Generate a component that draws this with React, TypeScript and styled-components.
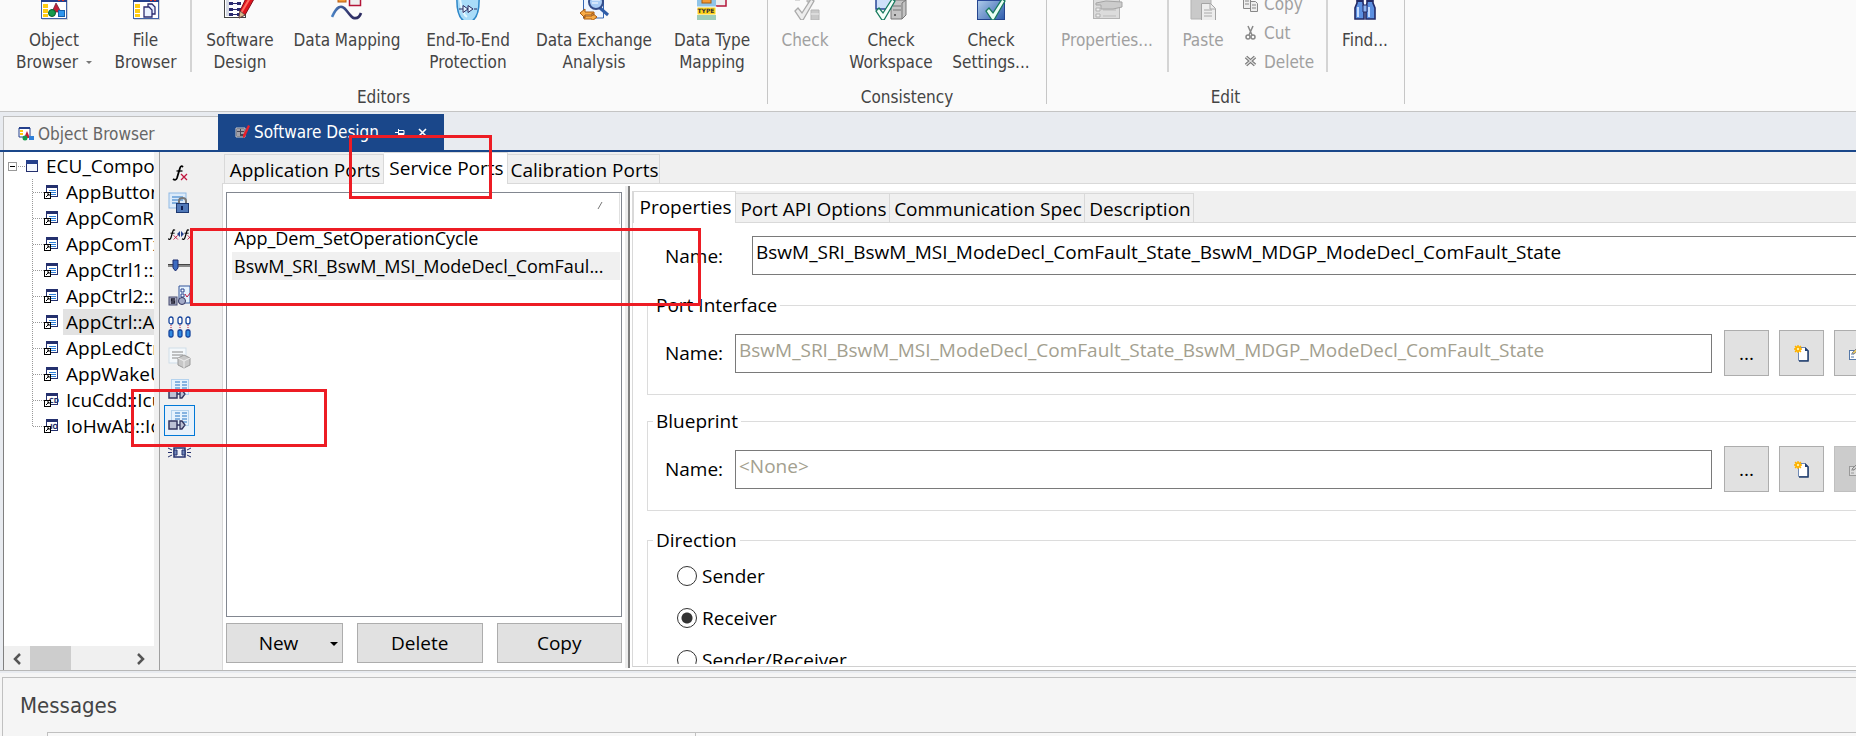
import React from 'react';
import styled, { createGlobalStyle, css } from 'styled-components';

const uiFont = '"Open Sans", "Noto Sans", sans-serif';
const chromeFont = '"DejaVu Sans Condensed", "DejaVu Sans", sans-serif';
const navy = '#1a478a';

const GlobalStyle = createGlobalStyle`
  *, *::before, *::after { box-sizing: border-box; }
  body { margin: 0; background: #e8ebf0; overflow: hidden; }
  button, input { font: inherit; color: inherit; }
`;

const Window = styled.div`
  position: relative;
  display: flex;
  flex-direction: column;
  height: 100vh;
  overflow: hidden;
  font: 19px/26px ${uiFont};
  color: #000;
`;

/* ---------- ribbon ---------- */
const Ribbon = styled.header`
  display: flex;
  flex: none;
  height: 112px;
  overflow: hidden;
  background: #fafafa;
  border-bottom: 1px solid #c4c4c4;
  font: 17px/22px ${chromeFont};
  color: #444;
`;
const Group = styled.section<{ $width: number }>`
  display: flex;
  flex-direction: column;
  flex: none;
  width: ${p => p.$width}px;
  height: 104px;
  border-right: 1px solid #c6c6c6;
`;
const GroupBody = styled.div`
  display: flex;
  flex: none;
  height: 98px;
  margin-top: -12px;
`;
const GroupLabel = styled.div`
  flex: none;
  text-align: center;
`;
const Tool = styled.button<{ $width: number }>`
  display: flex;
  flex-direction: column;
  align-items: center;
  flex: none;
  gap: 9px;
  width: ${p => p.$width}px;
  padding: 0;
  border: 0;
  background: none;
  white-space: nowrap;
  svg { flex: none; }
  &:disabled { color: #a0a0a0; }
`;
const Separator = styled.div<{ $space?: number }>`
  flex: none;
  width: 2px;
  height: 84px;
  margin: 0 ${p => p.$space ?? 0}px;
  background: #d4d4d4;
`;
const Caret = styled.span`
  display: inline-block;
  margin: 0 0 4px 8px;
  border: 3px solid transparent;
  border-top-color: #777;
  border-bottom: 0;
`;
const SmallTools = styled.div`
  display: flex;
  flex-direction: column;
  width: 89px;
  padding: 1px 0 0 5px;
`;
const SmallTool = styled.button`
  display: flex;
  align-items: center;
  gap: 5px;
  height: 29px;
  padding: 0;
  border: 0;
  background: none;
  &:disabled { color: #a0a0a0; }
`;

/* ---------- document tabs ---------- */
const DocTabs = styled.nav`
  display: flex;
  flex: none;
  align-items: flex-end;
  height: 40px;
  padding: 0 0 0 3px;
  border-bottom: 2px solid ${navy};
  background: #e8ebf0;
  font: 17px/22px ${chromeFont};
`;
const DocTab = styled.button<{ $active?: boolean }>`
  display: flex;
  align-items: center;
  flex: none;
  gap: 4px;
  width: 215px;
  height: 34px;
  padding: 0 14px;
  border: 1px solid #c0c0c0;
  border-width: 1px 0 0 1px;
  background: #f5f5f5;
  color: #666;
  white-space: nowrap;
  ${p => p.$active && css`
    width: 226px;
    height: 36px;
    padding: 0 0 0 17px;
    border: 0;
    background: ${navy};
    color: #fff;
  `}
`;
const TabTools = styled.span`
  display: flex;
  gap: 13px;
  margin-left: 12px;
`;

/* ---------- workspace ---------- */
const Workspace = styled.main`
  display: flex;
  flex: 1;
  min-height: 0;
  padding-left: 3px;
  border-bottom: 1px solid #b8b8b8;
`;
const TreePane = styled.aside`
  display: flex;
  flex-direction: column;
  flex: none;
  width: 157px;
  border: 1px solid #808080;
  border-width: 0 1px 0 1px;
  border-right-color: #a0a0a0;
  background: linear-gradient(to right, #fff 150px, #f0f0f0 150px);
`;
const Tree = styled.ul`
  flex: 1;
  width: 150px;
  margin: 0;
  padding: 1px 0 0;
  overflow: hidden;
  list-style: none;
`;
const TreeRow = styled.li`
  display: flex;
  align-items: center;
  height: 26px;
  white-space: nowrap;
  svg { flex: none; }
`;
const TreeText = styled.span<{ $selected?: boolean }>`
  flex: 1;
  height: 26px;
  margin-left: 4px;
  padding-left: 3px;
  background: ${p => (p.$selected ? '#e2e2e2' : 'transparent')};
`;
const ScrollBar = styled.div`
  display: flex;
  flex: none;
  width: 150px;
  height: 24px;
  background: #f0f0f0;
`;
const ScrollButton = styled.button`
  width: 26px;
  padding: 0;
  border: 0;
  background: none;
  line-height: 1;
`;
const ScrollTrack = styled.div`
  flex: 1;
`;
const ScrollThumb = styled.div`
  width: 41px;
  height: 100%;
  background: #cdcdcd;
`;

const SideBar = styled.div`
  display: flex;
  flex-direction: column;
  align-items: center;
  flex: none;
  width: 62px;
  padding: 5px 27px 0 4px;
  background: #f0f0f0;
`;
const SideButton = styled.button<{ $active?: boolean }>`
  display: flex;
  align-items: center;
  justify-content: center;
  flex: none;
  width: 31px;
  height: 31px;
  padding: 0;
  border: 1px solid ${p => (p.$active ? '#0078d7' : 'transparent')};
  background: ${p => (p.$active ? '#e8f1fa' : 'none')};
`;

const Editor = styled.div`
  display: flex;
  flex-direction: column;
  flex: 1;
  min-width: 0;
  background: #f0f0f0;
`;
const TabRow = styled.div<{ $inset?: boolean }>`
  display: flex;
  align-items: flex-end;
  flex: none;
  height: 32px;
  padding-left: ${p => (p.$inset ? 2 : 0)}px;
  border-bottom: 1px solid #d9d9d9;
  background: #f0f0f0;
`;
const Tab = styled.button<{ $width: number; $active?: boolean }>`
  flex: none;
  width: ${p => p.$width}px;
  height: 29px;
  padding: 1px 0 0 2px;
  border: 1px solid #d9d9d9;
  border-width: 1px 1px 0 0;
  background: #f0f0f0;
  white-space: nowrap;
  &:first-child { border-left-width: 1px; }
  ${p => p.$active && css`
    height: 32px;
    margin-bottom: -1px;
    padding-bottom: 3px;
    background: #fff;
  `}
`;
const EditorBody = styled.div`
  display: flex;
  flex: 1;
  min-height: 0;
  border-left: 1px solid #d9d9d9;
  background: #fff;
`;

/* ---------- port list ---------- */
const ListPane = styled.div`
  display: flex;
  flex-direction: column;
  flex: none;
  width: 402px;
  gap: 6px;
  padding: 8px 3px 7px 3px;
`;
const ListBox = styled.ul`
  flex: 1;
  margin: 0;
  padding: 0 1px 0 5px;
  border: 1px solid #828790;
  list-style: none;
`;
const ListHeader = styled.li`
  height: 31px;
  padding: 1px 16px 0;
  border-right: 1px solid #e0e0e0;
  text-align: right;
  line-height: 1;
`;
const ListItem = styled.li<{ $selected?: boolean }>`
  height: 28px;
  padding-left: 2px;
  overflow: hidden;
  white-space: nowrap;
  font-size: 18px;
  line-height: 28px;
  background: ${p => (p.$selected ? '#f0f0f0' : 'transparent')};
`;
const ListActions = styled.div`
  display: flex;
  gap: 14px;
  height: 40px;
`;
const Action = styled.button`
  position: relative;
  flex: 1;
  padding: 0;
  border: 1px solid #adadad;
  background: #e1e1e1;
`;
const SplitAction = styled(Action)`
  flex: none;
  width: 117px;
  padding-right: 12px;
`;
const DropMark = styled.span`
  position: absolute;
  right: 4px;
  top: 18px;
  border: 4px solid transparent;
  border-top-color: #000;
  border-bottom: 0;
`;
const Splitter = styled.div`
  flex: none;
  width: 5px;
  margin: 2px 2px 2px 0;
  border-right: 2px solid #808080;
  background: #ececec;
`;

/* ---------- properties ---------- */
const PropPane = styled.div`
  display: flex;
  flex-direction: column;
  flex: 1;
  min-width: 0;
  margin: 7px 0 3px;
  padding-bottom: 2px;
  border-left: 1px solid #d9d9d9;
  border-bottom: 1px solid #d0d0d0;
`;
const FormView = styled.div`
  flex: 1;
  min-height: 0;
  overflow: hidden;
`;
const Form = styled.form`
  width: calc(100% + 50px);
  padding: 13px 10px 0 14px;
`;
const Row = styled.div<{ $outer?: boolean }>`
  display: flex;
  align-items: center;
  gap: 10px;
  padding-left: ${p => (p.$outer ? 18 : 0)}px;
`;
const FieldLabel = styled.label<{ $wide?: boolean }>`
  flex: none;
  width: ${p => (p.$wide ? 77 : 60)}px;
`;
const TextField = styled.input`
  flex: 1;
  min-width: 0;
  height: 39px;
  margin-right: 2px;
  padding: 0 3px 7px;
  border: 1px solid #7a7a7a;
  border-radius: 0;
  background: #fff;
  outline: 0;
  &:disabled { color: #a3a08f; }
`;
const IconButton = styled.button`
  display: flex;
  align-items: center;
  justify-content: center;
  flex: none;
  width: 45px;
  height: 46px;
  padding: 0;
  border: 1px solid #adadad;
  background: #e1e1e1;
  &:disabled { border-color: #bfbfbf; background: #ccc; }
`;
const Fieldset = styled.fieldset<{ $gap: number }>`
  min-width: 0;
  margin: ${p => p.$gap}px 0 0;
  padding: 12px 16px 18px 17px;
  border: 1px solid #dcdcdc;
`;
const Legend = styled.legend`
  margin-left: -12px;
  padding: 0 3px;
`;
const RadioLabel = styled.label`
  display: flex;
  align-items: center;
  gap: 5px;
  height: 42px;
  padding-left: 12px;
`;
const RadioGroup = styled.div`
  margin-top: -10px;
`;
const Radio = styled.input`
  appearance: none;
  width: 20px;
  height: 20px;
  margin: 0;
  border: 1px solid #333;
  border-radius: 50%;
  background: #fff;
  &:checked { background: radial-gradient(circle, #333 5px, #fff 6px); }
`;

/* ---------- messages ---------- */
const MessagesArea = styled.footer`
  flex: none;
  height: 65px;
  padding: 6px 0 0 2px;
  background: linear-gradient(to bottom, #e8ebf0 2px, #f5f5f5 2px);
`;
const MessagesPanel = styled.section`
  height: 100%;
  border: 1px solid #c0c0c0;
  border-width: 1px 0 0 1px;
`;
const MessagesTitle = styled.h2`
  height: 54px;
  margin: 0;
  padding: 15px 17px 0;
  font: 22px/26px ${chromeFont};
  color: #444;
`;
const MessageColumns = styled.div`
  display: flex;
  margin-left: 44px;
  border: 1px solid #c0c0c0;
  border-width: 1px 0 0 1px;
  background: #f8f8f8;
`;
const MessageColumn = styled.div`
  width: 648px;
  height: 4px;
  border-right: 1px solid #c0c0c0;
`;

/* Review marks drawn over the window. */
const Mark = styled.div<{ $x: number; $y: number; $w: number; $h: number }>`
  position: absolute;
  left: ${p => p.$x}px;
  top: ${p => p.$y}px;
  width: ${p => p.$w}px;
  height: ${p => p.$h}px;
  border: 3px solid #ed1c24;
  pointer-events: none;
`;

/* ---------- ribbon icons ---------- */
const Svg32 = ({ children }: { children: React.ReactNode }) => (
  <svg width="32" height="32" viewBox="0 0 32 32" aria-hidden="true">{children}</svg>
);
const BrowserFrame = () => (
  <>
    <rect x="4" y="5" width="26" height="27" fill="#bbb" opacity=".6" />
    <rect x="3.500" y="4.500" width="25" height="26" fill="#fff" stroke="#3f62a8" />
    <rect x="3" y="4" width="26" height="10" fill="#24408c" />
    <path d="M20 12h2M24 12h2" stroke="#e03020" strokeWidth="2" />
    <path d="M5 16h5v4H5zM5 21h5v4H5zM5 26h5v3H5z" fill="#ffcc12" />
  </>
);
const ObjectBrowserIcon = () => (
  <Svg32>
    <BrowserFrame />
    <path d="M18 15l5 9h-9z" fill="#c32036" stroke="#602030" strokeWidth=".7" />
    <circle cx="14" cy="25" r="3.500" fill="#149a4b" stroke="#0a5b30" />
    <rect x="20.500" y="22.500" width="6" height="6" fill="#2f96ee" stroke="#1660aa" />
  </Svg32>
);
const FileBrowserIcon = () => (
  <Svg32>
    <BrowserFrame />
    <g fill="#eaf1ff" stroke="#2c2c70" strokeWidth="1.300">
      <path d="M18 16h4l3 3v7h-7z" />
      <path d="M14 19h5l3 3v7h-8z" />
    </g>
  </Svg32>
);
const SoftwareIcon = () => (
  <Svg32>
    <rect x="0.500" y="3.500" width="21" height="26" fill="#fff" stroke="#444" />
    <rect x="2" y="5" width="3" height="23" fill="#d6dae4" />
    <g fill="#2b2b70">
      {[8, 14, 20, 25].map(y => (
        <g key={y}><rect x="5" y={y} width="4" height="3" /><rect x="13" y={y} width="4" height="3" /><rect x="8" y={y + 1} width="6" height="1" /></g>
      ))}
    </g>
    <path d="M23 8l7 3-9 16-6 3 1-7z" fill="#e0141e" stroke="#80101c" />
    <path d="M26 10l-9 15" stroke="#ff6a5e" strokeWidth="2" />
    <path d="M15 30l1-7 5 4z" fill="#d9b98c" stroke="#444" strokeWidth=".7" />
  </Svg32>
);
const MappingIcon = () => (
  <Svg32>
    <defs>
      <linearGradient id="wave"><stop stopColor="#4a82c4" /><stop offset=".6" stopColor="#33356c" /><stop offset="1" stopColor="#2b2b60" /></linearGradient>
    </defs>
    <rect x="7" y="5" width="8" height="9" fill="#f39a35" stroke="#b85c10" />
    <rect x="18.500" y="5.500" width="11" height="12" fill="#efefef" stroke="#b31438" strokeWidth="1.500" />
    <path d="M1 29Q8 13 15 22T23 30Q28 31 30 25" fill="none" stroke="url(#wave)" strokeWidth="2.600" />
  </Svg32>
);
const ShieldIcon = () => (
  <Svg32>
    <path d="M5 8Q16 12 27 8Q28 28 20 33H12Q4 28 5 8z" fill="#a9dcf9" stroke="#2d87c8" strokeWidth="1.500" />
    <path d="M8 11q2 15 7 18" stroke="#e4f7ff" strokeWidth="2" fill="none" />
    <path d="M7 21h4M22 21h3" stroke="#2b2b60" />
    <path d="M11 17.500v7l5-3.500zM16 17.500v7l5-3.500z" fill="#dff2ff" stroke="#2b2b60" />
  </Svg32>
);
const ExchangeIcon = () => (
  <Svg32>
    <path d="M5.500 5h20v25h-20z" fill="#eef5ff" stroke="#3566b2" />
    <path d="M22 20l8 7" stroke="#2e5ca8" strokeWidth="3" />
    <circle cx="18" cy="14" r="7" fill="#a9cdf5" stroke="#344c88" strokeWidth="2" />
    <path d="M14 12h8M14 15h6" stroke="#fff" />
    <path d="M2 25l5-4v3h9v3H7v3zM19 29l-5-4v3H6v3h8v2z" fill="#f8ab45" stroke="#a85a10" />
  </Svg32>
);
const TypeIcon = () => (
  <Svg32>
    <rect x="17" y="7" width="13" height="11" fill="#eee" stroke="#b31438" strokeWidth="1.500" />
    <rect x="1" y="5" width="19" height="28" fill="#8fc4e8" />
    <rect x="6" y="6" width="9" height="9" fill="#f39a35" stroke="#a85a10" />
    <rect x="1" y="19" width="19" height="8" fill="#ffd21c" stroke="#fff" />
    <rect x="1" y="27" width="19" height="6" fill="#9ecdb8" />
    <text x="10" y="25" textAnchor="middle" fontSize="6" fontWeight="700" fontFamily="DejaVu Sans" fill="#333">TYPE</text>
  </Svg32>
);
const CheckMark = ({ x = 0, color = '#fff', edge = '#177a5e' }) => (
  <path d={`M${4 + x} 23l3-3 4 5 9-14 3 2-11 19h-2z`} fill={color} stroke={edge} strokeWidth="1.300" />
);
const CheckIcon = () => (
  <Svg32>
    <path d="M6 4h5v8H6zM18 5h5v9h-5zM22 22h8v10h-8z" fill="#c9c9c9" stroke="#b5b5b5" />
    <path d="M22 26h8" stroke="#eee" />
    <CheckMark x={2} color="#ededed" edge="#aaa" />
  </Svg32>
);
const CheckWorkspaceIcon = () => (
  <Svg32>
    <path d="M1 4h17v17H1z" fill="#cfe0fa" stroke="#2a4798" strokeWidth="1.500" />
    <path d="M16 16l3-4h12v15l-4 4H16z" fill="#c4c4c4" stroke="#777" />
    <path d="M18 18h8M18 22h8M27 31V15l4-3" stroke="#777" fill="none" />
    <circle cx="20" cy="27" r="1" fill="#444" />
    <CheckMark x={-3} color="#f4fff9" edge="#177a5e" />
  </Svg32>
);
const CheckSettingsIcon = () => (
  <Svg32>
    <defs><linearGradient id="blue" x1="0" y1="0" x2="1" y2="1"><stop stopColor="#c8e0f6" /><stop offset="1" stopColor="#2e5cac" /></linearGradient></defs>
    <rect x="2.500" y="3.500" width="27" height="28" fill="url(#blue)" stroke="#24458e" />
    <rect x="2" y="3" width="28" height="10" fill="#2a4798" />
    <CheckMark x={7} color="#eafff4" />
  </Svg32>
);
const PropertiesIcon = () => (
  <Svg32>
    <rect x="2.500" y="6.500" width="26" height="24" fill="#dcdcdc" stroke="#b4b4b4" />
    <path d="M5 20h4v3H5zM5 26h4v3H5z" fill="#eee" stroke="#b0b0b0" />
    <path d="M12 22h13M12 28h13" stroke="#bbb" />
    <path d="M5 15l10-2 16 1v5l-9 2H10v-4H5z" fill="#ccc" stroke="#a5a5a5" />
  </Svg32>
);
const PasteIcon = () => (
  <Svg32>
    <path d="M4 3h20v28H4z" fill="#c9c9c9" stroke="#b3b3b3" />
    <path d="M14.500 15.500h9l5 5v12h-14z" fill="#ededed" stroke="#a4a4a4" />
    <path d="M23 15v6h5M17 22h8M17 25h8M17 28h8" stroke="#aaa" fill="none" />
  </Svg32>
);
const FindIcon = () => (
  <Svg32>
    <path d="M8 10h6v5l1 5v11H6V20l2-5zM18 10h6v5l2 5v11h-9V20l1-5z" fill="#5b8fe0" stroke="#222a66" strokeWidth="1.600" />
    <path d="M14 17h4v7h-4z" fill="#8eb4f0" stroke="#222a66" />
    <path d="M9 19v10M20 19v10" stroke="#c5dcff" strokeWidth="2" />
    <path d="M8 13h6M18 13h6" stroke="#222a66" strokeWidth="2" />
  </Svg32>
);
const Svg16 = ({ children }: { children: React.ReactNode }) => (
  <svg width="17" height="16" viewBox="0 0 17 16" aria-hidden="true">{children}</svg>
);
const CopyGlyph = () => (
  <Svg16><path d="M1.500 2.500h7v10h-7zM8.500 5.500h5l2 2v8h-7z" fill="#eee" stroke="#888" /><path d="M3 5h4M3 8h4M10 9h4M10 12h4" stroke="#888" /></Svg16>
);
const CutGlyph = () => (
  <Svg16><path d="M6 1l4 9M11 1L7 10" stroke="#888" strokeWidth="1.500" /><circle cx="6" cy="12" r="2" fill="none" stroke="#888" strokeWidth="1.500" /><circle cx="11" cy="12" r="2" fill="none" stroke="#888" strokeWidth="1.500" /></Svg16>
);
const DeleteGlyph = () => (
  <Svg16><path d="M4 3l9 8M13 3l-9 8" stroke="#777" strokeWidth="3.500" /><path d="M4 3l9 8M13 3l-9 8" stroke="#ddd" strokeWidth="1.200" /></Svg16>
);

/* ---------- tab and tree icons ---------- */
const ObjectTabIcon = () => (
  <svg width="16" height="16" viewBox="0 0 16 16" aria-hidden="true">
    <path d="M1 2h11v9H1z" fill="#fff" stroke="#24408c" /><path d="M1 1h11v2H1z" fill="#24408c" />
    <path d="M2 4h3v2H2zM2 7h3v2H2z" fill="#ffcc12" /><path d="M9 5l3 7H6z" fill="#c32036" />
    <circle cx="7" cy="12" r="2.500" fill="#149a4b" /><path d="M11 10h5v4h-5z" fill="#2f7fd8" />
  </svg>
);
const SoftwareTabIcon = () => (
  <svg width="15" height="16" viewBox="0 0 15 16" aria-hidden="true">
    <path d="M1 4h9v9H1z" fill="#445" stroke="#ccc" />
    <path d="M2 6h3M6 6h3M2 9h3M6 9h3M2 11h3" stroke="#fff" />
    <path d="M13 1l2 1-5 11-2 1v-3z" fill="#e8202a" />
  </svg>
);
const ComponentIcon = ({ tag }: { tag?: string }) => (
  <svg width="15" height="16" viewBox="0 0 15 16" aria-hidden="true">
    <rect x="2.500" y="1.500" width="11" height="11" fill="#fff" stroke="#24306e" />
    <path d="M2 1h12v3H2z" fill="#24306e" />
    {tag
      ? <text x="10" y="11" textAnchor="middle" fontSize="7" fontWeight="700" fontFamily="DejaVu Sans Condensed" fill="#24306e">{tag}</text>
      : <path d="M5 6.500h7M5 8.500h7M7 10.500h5" stroke="#2f7fd8" />}
    <rect x=".5" y="8.500" width="6" height="6" fill="#fff" stroke="#000" />
    <path d="M2 13l3-3M3 10h2v2" stroke="#000" fill="none" />
  </svg>
);
const Branch = ({ last }: { last?: boolean }) => (
  <svg width="40" height="26" aria-hidden="true">
    <path d={`M28.500 0V${last ? 13 : 26}M29 13.500h11`} stroke="#999" strokeDasharray="1 1" fill="none" />
  </svg>
);
const RootGlyph = () => (
  <svg width="35" height="26" aria-hidden="true">
    <rect x="4.500" y="9.500" width="8" height="8" fill="#fff" stroke="#999" />
    <path d="M6 13.500h5" stroke="#000" />
    <path d="M14 13.500h7" stroke="#999" strokeDasharray="1 1" />
    <rect x="22.500" y="8.500" width="11" height="10" fill="#f4f8ff" stroke="#24306e" />
    <path d="M22 7h12v4H22z" fill="#24408c" />
  </svg>
);

/* ---------- side bar icons ---------- */
const Svg22 = ({ children }: { children: React.ReactNode }) => (
  <svg width="23" height="23" viewBox="0 0 23 23" aria-hidden="true">{children}</svg>
);
const sheet = (x: number, y: number, grey?: boolean) => (
  <>
    <rect x={x} y={y} width="17" height="15" fill={grey ? '#f4f8fb' : '#dcebfa'} stroke={grey ? '#cfdde8' : '#8fb9e4'} />
    <path d={`M${x + 3} ${y + 4}h11M${x + 3} ${y + 7}h11M${x + 3} ${y + 10}h7`} stroke={grey ? '#888' : '#2674c4'} />
  </>
);
const PortTableIcon = () => (
  <Svg22>
    <rect x="3.500" y="1.500" width="17" height="15" fill="#e6f2fd" stroke="#b5d3ee" />
    <path d="M7 4h5M14 4h5M7 7h5M14 7h5M7 10h5M14 10h5M14 13h5" stroke="#2674c4" />
    <rect x="1" y="12" width="8" height="8" fill="#bcc1d4" stroke="#33355e" strokeWidth="1.500" />
    <path d="M9 16h3M12 12h2l3 4-3 4h-2z" fill="#bcc1d4" stroke="#33355e" strokeWidth="1.300" />
  </Svg22>
);
/* The script f with its small red cross. */
const FunctionSign = ({ x, scale }: { x: number; scale: number }) => (
  <g transform={`translate(${x} 4) scale(${scale})`} fill="none">
    <path d="M10 2Q8 0 7 3L4 13Q3 16 0 14" stroke="#000" strokeWidth="1.800" />
    <path d="M3.500 6h6" stroke="#000" strokeWidth="1.300" />
    <path d="M8 9l6 6M14 9l-6 6" stroke="#c0143c" strokeWidth="1.300" />
  </g>
);
const sideIcons: { name: string; icon: React.ReactNode; active?: boolean }[] = [
  { name: 'Runnables', icon: <Svg22><FunctionSign x={5} scale={1} /></Svg22> },
  {
    name: 'Exclusive areas',
    icon: <Svg22>{sheet(1, 1)}<path d="M11 12V9q0-3 3.500-3t3.500 3v3" fill="none" stroke="#777" strokeWidth="2" /><rect x="8.500" y="11.500" width="12" height="9" fill="#5078b8" stroke="#1c3870" /><path d="M14 14v4" stroke="#0c1c50" strokeWidth="2" /></Svg22>,
  },
  {
    name: 'Runnable relations',
    icon: <Svg22><g transform="translate(0 2)"><FunctionSign x={0} scale={0.7} /><path d="M9 9l3-3v6zM16 9l-3-3v6z" fill="#24408c" /><FunctionSign x={14} scale={0.7} /></g></Svg22>,
  },
  {
    name: 'Calibration',
    icon: <Svg22><path d="M0 11.500h23" stroke="#888" strokeWidth="3" /><path d="M0 10.500h23" stroke="#444" /><path d="M5 6h5v8l-2.500 3L5 14z" fill="#3e6cc0" stroke="#1c2c70" /></Svg22>,
  },
  {
    name: 'Service needs',
    icon: <Svg22><path d="M11 1h11v17H11z" fill="#e6f2fd" stroke="#33559a" /><path d="M13 4h3v3h-3zM13 9h3v3h-3z" fill="#fff" stroke="#24408c" /><path d="M17 9l2 3 4-5" stroke="#c0143c" fill="none" /><rect x="1" y="12" width="8" height="8" fill="#a8abc0" stroke="#444a70" /><path d="M7 14H3.500v2H6.500v2H3" fill="none" stroke="#223" strokeWidth="1.300" /><circle cx="14" cy="16" r="3.500" fill="#a4abc8" stroke="#33355e" /></Svg22>,
  },
  {
    name: 'Connections',
    icon: <Svg22>{[1, 10, 18].map(x => <g key={x}><rect x={x} y="1" width="4" height="7" rx="2" fill="#fff" stroke="#16449c" strokeWidth="1.300" /><path d={`M${x + 2} 9v5`} stroke="#c0143c" strokeDasharray="1 1" /><rect x={x} y="14" width="4" height="7" rx="1.500" fill="#2f8ae0" stroke="#16449c" strokeWidth="1.300" /></g>)}</Svg22>,
  },
  {
    name: 'Memory',
    icon: <Svg22>{sheet(1, 1, true)}<path d="M10 11l6-3 6 3v7l-6 3-6-3z" fill="#c8c8c8" stroke="#999" /><path d="M10 11l6 3 6-3M16 14v7" stroke="#eee" fill="none" /></Svg22>,
  },
  { name: 'Port access', icon: <PortTableIcon /> },
  { name: 'Ports', icon: <PortTableIcon />, active: true },
  {
    name: 'Component',
    icon: <Svg22><path d="M6 8h11v9H6z" fill="#eef2fa" stroke="#24306e" strokeWidth="1.500" /><path d="M6 10h3v5H6zM14 10h3v5h-3z" fill="#6f87b8" stroke="#24306e" /><path d="M0 8l4 2M0 12.500h4M0 17l4-2M23 8l-4 2M23 12.500h-4M23 17l-4-2" stroke="#24306e" /></Svg22>,
  },
];

const NewIcon = () => (
  <svg width="16" height="18" viewBox="0 0 16 18" aria-hidden="true">
    <path d="M4.500 3.500h7l3 3v10h-10z" fill="#fff" stroke="#6f89b4" /><path d="M14 7v10H5" stroke="#24406e" strokeWidth="1.500" fill="none" /><path d="M11 3v4h4" fill="#24406e" />
    <circle cx="4" cy="5" r="3" fill="#ffd800" /><path d="M4 1v8M0 5h8M1 2l6 6M7 2L1 8" stroke="#ffab00" strokeWidth="1.300" /><circle cx="4" cy="5" r="1.200" fill="#fff6a0" />
  </svg>
);
const EditIcon = ({ grey }: { grey?: boolean }) => (
  <svg width="17" height="18" viewBox="0 0 17 18" aria-hidden="true">
    <rect x="1.500" y="6.500" width="13" height="9" fill={grey ? '#ddd' : '#fff'} stroke={grey ? '#999' : '#5578a8'} />
    <path d="M3 10h3M3 13h3M8 10h5M8 13h5" stroke={grey ? '#999' : '#5578a8'} />
    <path d="M4 9l8-8 2 2-8 7z" fill={grey ? '#ccc' : '#e8c860'} stroke="#888" />
  </svg>
);

const treeItems: { text: string; tag?: string; selected?: boolean }[] = [
  { text: 'AppButton' }, { text: 'AppComRx' }, { text: 'AppComTx' }, { text: 'AppCtrl1::A' },
  { text: 'AppCtrl2::A' }, { text: 'AppCtrl::A', selected: true }, { text: 'AppLedCtrl' },
  { text: 'AppWakeUp' }, { text: 'IcuCdd::Icu', tag: 'CD' }, { text: 'IoHwAb::Io', tag: 'IO' },
];
const portName = 'BswM_SRI_BswM_MSI_ModeDecl_ComFault_State_BswM_MDGP_ModeDecl_ComFault_State';

function ReferenceGroup({ title, id, value, gap, canEdit }: {
  title: string; id: string; value: string; gap: number; canEdit?: boolean;
}) {
  return (
    <Fieldset $gap={gap}>
      <Legend>{title}</Legend>
      <Row>
        <FieldLabel htmlFor={id}>Name:</FieldLabel>
        <TextField id={id} disabled defaultValue={value} />
        <IconButton type="button">...</IconButton>
        <IconButton type="button" aria-label="New"><NewIcon /></IconButton>
        <IconButton type="button" aria-label="Edit" disabled={!canEdit}><EditIcon grey={!canEdit} /></IconButton>
      </Row>
    </Fieldset>
  );
}

export default function App() {
  return (
    <>
      <GlobalStyle />
      <Window>
        <Ribbon>
          <Group $width={768}>
            <GroupBody>
              <Tool $width={108}><ObjectBrowserIcon /><span>Object<br />Browser<Caret /></span></Tool>
              <Tool $width={75}><FileBrowserIcon /><span>File<br />Browser</span></Tool>
              <Separator $space={7} />
              <Tool $width={82}><SoftwareIcon /><span>Software<br />Design</span></Tool>
              <Tool $width={132}><MappingIcon /><span>Data Mapping</span></Tool>
              <Tool $width={110}><ShieldIcon /><span>End-To-End<br />Protection</span></Tool>
              <Tool $width={142}><ExchangeIcon /><span>Data Exchange<br />Analysis</span></Tool>
              <Tool $width={94}><TypeIcon /><span>Data Type<br />Mapping</span></Tool>
            </GroupBody>
            <GroupLabel>Editors</GroupLabel>
          </Group>
          <Group $width={279}>
            <GroupBody>
              <Tool $width={74} disabled><CheckIcon /><span>Check</span></Tool>
              <Tool $width={98}><CheckWorkspaceIcon /><span>Check<br />Workspace</span></Tool>
              <Tool $width={102}><CheckSettingsIcon /><span>Check<br />Settings...</span></Tool>
            </GroupBody>
            <GroupLabel>Consistency</GroupLabel>
          </Group>
          <Group $width={358}>
            <GroupBody>
              <Tool $width={120} disabled><PropertiesIcon /><span>Properties...</span></Tool>
              <Separator />
              <Tool $width={68} disabled><PasteIcon /><span>Paste</span></Tool>
              <SmallTools>
                <SmallTool disabled><CopyGlyph />Copy</SmallTool>
                <SmallTool disabled><CutGlyph />Cut</SmallTool>
                <SmallTool disabled><DeleteGlyph />Delete</SmallTool>
              </SmallTools>
              <Separator />
              <Tool $width={74}><FindIcon /><span>Find...</span></Tool>
            </GroupBody>
            <GroupLabel>Edit</GroupLabel>
          </Group>
        </Ribbon>

        <DocTabs>
          <DocTab><ObjectTabIcon />Object Browser</DocTab>
          <DocTab $active>
            <SoftwareTabIcon />Software Design
            <TabTools>
              <svg width="10" height="12" viewBox="0 0 10 12" aria-hidden="true"><path d="M0 6.500h3M3.500 3v7M4 4.500h5v4H4M4 7.500h5" stroke="#fff" fill="none" /></svg>
              <svg width="10" height="12" viewBox="0 0 10 12" aria-hidden="true"><path d="M1 3l7 7M8 3l-7 7" stroke="#fff" strokeWidth="1.600" /></svg>
            </TabTools>
          </DocTab>
        </DocTabs>

        <Workspace>
          <TreePane>
            <Tree>
              <TreeRow><RootGlyph /><TreeText>ECU_Composition</TreeText></TreeRow>
              {treeItems.map((item, i) => (
                <TreeRow key={item.text}>
                  <Branch last={i === treeItems.length - 1} />
                  <ComponentIcon tag={item.tag} />
                  <TreeText $selected={item.selected}>{item.text}</TreeText>
                </TreeRow>
              ))}
            </Tree>
            <ScrollBar>
              <ScrollButton aria-label="Scroll left"><svg width="10" height="12"><path d="M8 1L3 6l5 5" stroke="#555" strokeWidth="2.500" fill="none" /></svg></ScrollButton>
              <ScrollTrack><ScrollThumb /></ScrollTrack>
              <ScrollButton aria-label="Scroll right"><svg width="10" height="12"><path d="M2 1l5 5-5 5" stroke="#555" strokeWidth="2.500" fill="none" /></svg></ScrollButton>
            </ScrollBar>
          </TreePane>

          <SideBar>
            {sideIcons.map(s => (
              <SideButton key={s.name} aria-label={s.name} $active={s.active}>{s.icon}</SideButton>
            ))}
          </SideBar>

          <Editor>
            <TabRow $inset>
              <Tab $width={160}>Application Ports</Tab>
              <Tab $width={124} $active>Service Ports</Tab>
              <Tab $width={152}>Calibration Ports</Tab>
            </TabRow>
            <EditorBody>
              <ListPane>
                <ListBox>
                  <ListHeader><svg width="6" height="8" aria-hidden="true"><path d="M1 7l4-7" stroke="#777" /></svg></ListHeader>
                  <ListItem>App_Dem_SetOperationCycle</ListItem>
                  <ListItem $selected>BswM_SRI_BswM_MSI_ModeDecl_ComFaul...</ListItem>
                </ListBox>
                <ListActions>
                  <SplitAction>New<DropMark /></SplitAction>
                  <Action>Delete</Action>
                  <Action>Copy</Action>
                </ListActions>
              </ListPane>
              <Splitter />
              <PropPane>
                <TabRow>
                  <Tab $width={103} $active>Properties</Tab>
                  <Tab $width={154}>Port API Options</Tab>
                  <Tab $width={195}>Communication Spec</Tab>
                  <Tab $width={109}>Description</Tab>
                </TabRow>
                <FormView>
                  <Form>
                    <Row $outer>
                      <FieldLabel $wide htmlFor="port-name">Name:</FieldLabel>
                      <TextField id="port-name" defaultValue={portName} />
                    </Row>
                    <ReferenceGroup title="Port Interface" id="interface-name" value={portName} gap={17} canEdit />
                    <ReferenceGroup title="Blueprint" id="blueprint-name" value="<None>" gap={13} />
                    <Fieldset $gap={16}>
                      <Legend>Direction</Legend>
                      <RadioGroup>
                        <RadioLabel><Radio type="radio" name="direction" />Sender</RadioLabel>
                        <RadioLabel><Radio type="radio" name="direction" defaultChecked />Receiver</RadioLabel>
                        <RadioLabel><Radio type="radio" name="direction" />Sender/Receiver</RadioLabel>
                      </RadioGroup>
                    </Fieldset>
                  </Form>
                </FormView>
              </PropPane>
            </EditorBody>
          </Editor>
        </Workspace>

        <MessagesArea>
          <MessagesPanel>
            <MessagesTitle>Messages</MessagesTitle>
            <MessageColumns><MessageColumn /></MessageColumns>
          </MessagesPanel>
        </MessagesArea>

        <Mark $x={349} $y={135} $w={143} $h={64} />
        <Mark $x={190} $y={228} $w={511} $h={78} />
        <Mark $x={131} $y={389} $w={196} $h={58} />
      </Window>
    </>
  );
}
